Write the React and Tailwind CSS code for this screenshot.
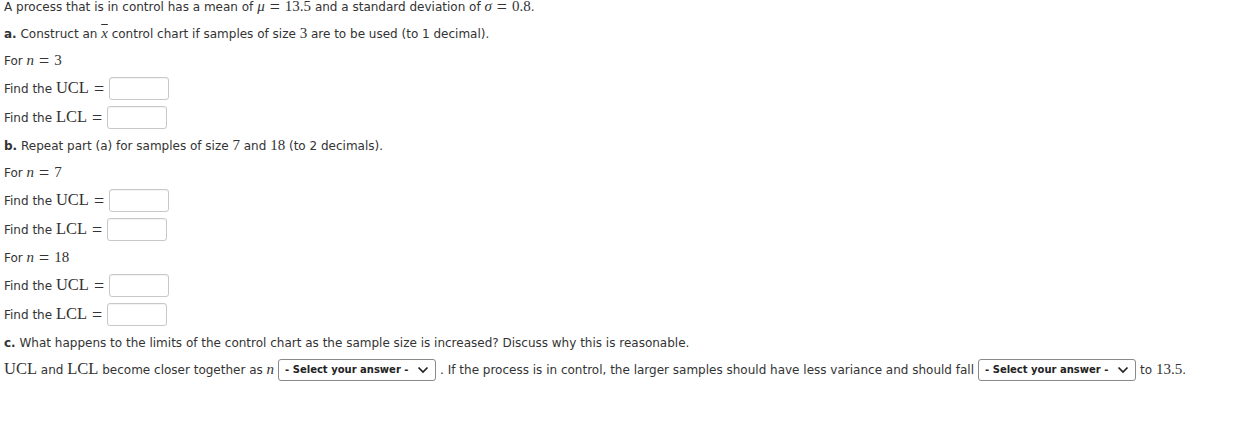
import React from "react";

const M = ({ children, i }) => (
  <span className={`font-['Liberation_Serif',serif] text-[15px] ${i ? "italic" : ""}`}>{children}</span>
);

const W = ({ children }) => (
  <span className="font-['Liberation_Serif',serif] text-[16.5px]">{children}</span>
);

const Eq = () => <span className="font-['Liberation_Serif',serif] text-[18px] leading-none mx-[5px]">=</span>;

const Box = () => (
  <span className="inline-block w-[60px] h-[23px] border border-[#c8c8c8] rounded-[3px] bg-white shadow-[inset_0_1px_1px_rgba(0,0,0,0.05)]" />
);

const Sel = () => (
  <span className="inline-flex items-center justify-between w-[158px] h-[22px] border border-[#8a8a8a] rounded-[3px] bg-white pl-[6px] pr-[6px] mx-[4px] text-[10px] font-bold text-[#222] shrink-0">
    <span>- Select your answer -</span>
    <svg width="12" height="8" viewBox="0 0 12 8" className="shrink-0">
      <path d="M1.5 1.5 L6 6 L10.5 1.5" fill="none" stroke="#222" strokeWidth="1.7" />
    </svg>
  </span>
);

const T = ({ children }) => <div className="h-[27px] flex items-center whitespace-nowrap">{children}</div>;
const R = ({ children }) => <div className="h-[29px] flex items-center whitespace-nowrap">{children}</div>;

export default function App() {
  return (
    <div className="bg-white w-[1259px] h-[435px] overflow-hidden text-[#333] text-[12px] font-['DejaVu_Sans',Verdana,sans-serif]">
      <div className="mt-[-7px] pl-[4px]">
        <T>
          A process that is in control has a mean of&nbsp;<M i>μ</M><Eq /><M>13.5</M>&nbsp;and a standard deviation of&nbsp;<M i>σ</M><Eq /><M>0.8</M>.
        </T>
        <T>
          <b>a.</b>&nbsp;Construct an&nbsp;<M i><span className="overline">x</span></M>&nbsp;control chart if samples of size&nbsp;<M>3</M>&nbsp;are to be used (to 1 decimal).
        </T>
        <T>
          For&nbsp;<M i>n</M><Eq /><M>3</M>
        </T>
        <R>
          Find the&nbsp;<W>UCL</W><Eq /><Box />
        </R>
        <R>
          Find the&nbsp;<W>LCL</W><Eq /><Box />
        </R>
        <T>
          <b>b.</b>&nbsp;Repeat part (a) for samples of size&nbsp;<M>7</M>&nbsp;and&nbsp;<M>18</M>&nbsp;(to 2 decimals).
        </T>
        <T>
          For&nbsp;<M i>n</M><Eq /><M>7</M>
        </T>
        <R>
          Find the&nbsp;<W>UCL</W><Eq /><Box />
        </R>
        <R>
          Find the&nbsp;<W>LCL</W><Eq /><Box />
        </R>
        <T>
          For&nbsp;<M i>n</M><Eq /><M>18</M>
        </T>
        <R>
          Find the&nbsp;<W>UCL</W><Eq /><Box />
        </R>
        <R>
          Find the&nbsp;<W>LCL</W><Eq /><Box />
        </R>
        <T>
          <b>c.</b>&nbsp;What happens to the limits of the control chart as the sample size is increased? Discuss why this is reasonable.
        </T>
        <T>
          <W>UCL</W>&nbsp;and&nbsp;<W>LCL</W>&nbsp;become closer together as&nbsp;<M i>n</M><Sel />. If the process is in control, the larger samples should have less variance and should fall<Sel />to&nbsp;<M>13.5</M>.
        </T>
      </div>
    </div>
  );
}
